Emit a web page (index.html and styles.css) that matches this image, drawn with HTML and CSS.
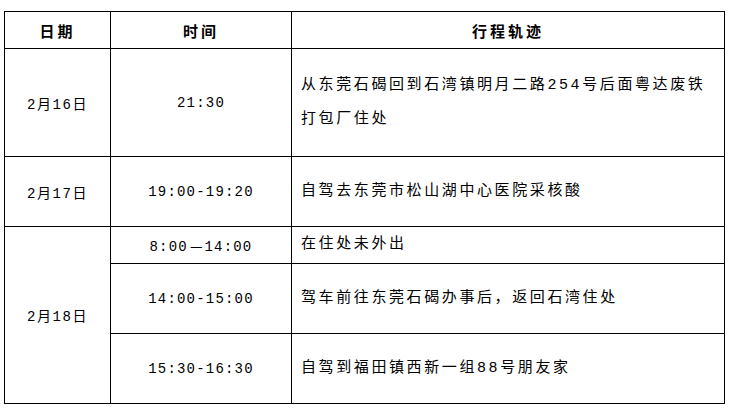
FILE: index.html
```html
<!DOCTYPE html>
<html lang="zh-CN">
<head>
<meta charset="utf-8">
<title>行程轨迹</title>
<link rel="stylesheet" href="styles.css">
</head>
<body>
<table class="trip">
  <colgroup>
    <col class="c-date">
    <col class="c-time">
    <col class="c-desc">
  </colgroup>
  <thead>
    <tr class="r-head"><th>日期</th><th>时间</th><th>行程轨迹</th></tr>
  </thead>
  <tbody>
    <tr class="r-tall">
      <td class="date">2月16日</td>
      <td class="time">21:30</td>
      <td class="desc">从东莞石碣回到石湾镇明月二路254号后面粤达废铁<br>打包厂住处</td>
    </tr>
    <tr class="r-mid">
      <td class="date">2月17日</td>
      <td class="time">19:00-19:20</td>
      <td class="desc">自驾去东莞市松山湖中心医院采核酸</td>
    </tr>
    <tr class="r-short">
      <td class="date" rowspan="3">2月18日</td>
      <td class="time">8:00<span class="dash">—</span>14:00</td>
      <td class="desc">在住处未外出</td>
    </tr>
    <tr class="r-mid">
      <td class="time">14:00-15:00</td>
      <td class="desc">驾车前往东莞石碣办事后，返回石湾住处</td>
    </tr>
    <tr class="r-mid">
      <td class="time">15:30-16:30</td>
      <td class="desc">自驾到福田镇西新一组88号朋友家</td>
    </tr>
  </tbody>
</table>
</body>
</html>
```
FILE: styles.css
```css
html, body {
  margin: 0;
  padding: 0;
  background: #fff;
}

body {
  padding: 11px 0 0 4px;
  color: #000;
  font-family: "Liberation Mono", "Noto Sans CJK SC", monospace;
}

.trip {
  border-collapse: collapse;
  table-layout: fixed;
  width: 720px;
}

.c-date { width: 106px; }
.c-time { width: 181px; }
.c-desc { width: 433px; }

.trip th,
.trip td {
  border: 1px solid #000;
  padding: 0;
  vertical-align: middle;
  font-weight: normal;
}

.trip th {
  font-family: "Noto Sans CJK SC", sans-serif;
  font-weight: bold;
  font-size: 15px;
  letter-spacing: 3px;
  text-align: center;
}

.r-head { height: 37px; }
.r-tall { height: 108px; }
.r-mid { height: 70px; }
.r-short { height: 37px; }

.trip .date,
.trip .time {
  text-align: center;
  font-size: 14px;
  letter-spacing: 1.2px;
}

.trip .date {
  letter-spacing: 1.6px;
}

.dash {
  font-family: "Noto Sans CJK SC", sans-serif;
  letter-spacing: 0;
  padding: 0 2px;
}

.trip .desc {
  text-align: left;
  padding-left: 9px;
  font-size: 15px;
  letter-spacing: 2.6px;
  line-height: 34px;
}
```
